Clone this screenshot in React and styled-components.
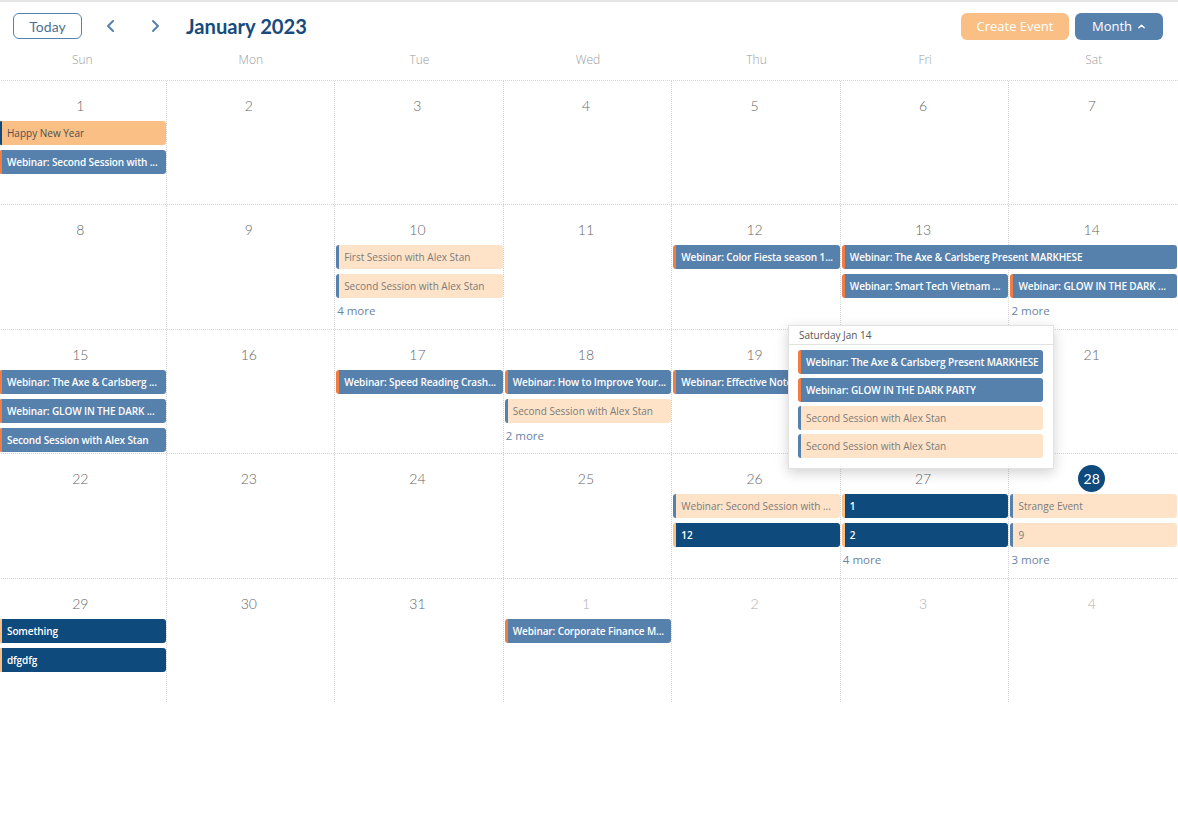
import React from "react";
import styled, { createGlobalStyle, css } from "styled-components";

const GlobalStyle = createGlobalStyle`
  body {
    margin: 0;
    background: #fff;
    font-family: "Open Sans", "Liberation Sans", sans-serif;
    overflow: hidden;
  }
  * { box-sizing: border-box; }
`;

const colors = {
  blue: "#5781ad",
  navy: "#0f4a7c",
  orange: "#f9bf84",
  peach: "#fee3c8",
  accent: "#f07d44",
  line: "#d4d4d4",
};

const eventTypes = {
  orange: { bg: colors.orange, fg: "#4f4f4f", edge: colors.navy, weight: 400 },
  blue: { bg: colors.blue, fg: "#fff", edge: colors.accent, weight: 600 },
  peach: { bg: colors.peach, fg: "#7b7b7b", edge: colors.blue, weight: 400 },
  navy: { bg: colors.navy, fg: "#fff", edge: colors.orange, weight: 600 },
};

const DAYS = ["Sun", "Mon", "Tue", "Wed", "Thu", "Fri", "Sat"];

const weeks = [
  {
    days: [1, 2, 3, 4, 5, 6, 7],
    events: [
      { col: 1, row: 2, type: "orange", title: "Happy New Year" },
      { col: 1, row: 3, type: "blue", title: "Webinar: Second Session with ..." },
    ],
    more: [],
  },
  {
    days: [8, 9, 10, 11, 12, 13, 14],
    events: [
      { col: 3, row: 2, type: "peach", title: "First Session with Alex Stan" },
      { col: 3, row: 3, type: "peach", title: "Second Session with Alex Stan" },
      { col: 5, row: 2, type: "blue", title: "Webinar: Color Fiesta season 1..." },
      { col: 6, span: 2, row: 2, type: "blue", title: "Webinar: The Axe & Carlsberg Present MARKHESE" },
      { col: 6, row: 3, type: "blue", title: "Webinar: Smart Tech Vietnam ..." },
      { col: 7, row: 3, type: "blue", title: "Webinar: GLOW IN THE DARK ..." },
    ],
    more: [
      { col: 3, row: 4, count: 4 },
      { col: 7, row: 4, count: 2 },
    ],
  },
  {
    days: [15, 16, 17, 18, 19, 20, 21],
    events: [
      { col: 1, row: 2, type: "blue", title: "Webinar: The Axe & Carlsberg ..." },
      { col: 1, row: 3, type: "blue", title: "Webinar: GLOW IN THE DARK ..." },
      { col: 1, row: 4, type: "blue", title: "Second Session with Alex Stan" },
      { col: 3, row: 2, type: "blue", title: "Webinar: Speed Reading Crash..." },
      { col: 4, row: 2, type: "blue", title: "Webinar: How to Improve Your..." },
      { col: 4, row: 3, type: "peach", title: "Second Session with Alex Stan" },
      { col: 5, row: 2, type: "blue", title: "Webinar: Effective Note Taki..." },
    ],
    more: [{ col: 4, row: 4, count: 2 }],
  },
  {
    days: [22, 23, 24, 25, 26, 27, 28],
    today: 28,
    events: [
      { col: 5, row: 2, type: "peach", title: "Webinar: Second Session with ..." },
      { col: 5, row: 3, type: "navy", title: "12" },
      { col: 6, row: 2, type: "navy", title: "1" },
      { col: 6, row: 3, type: "navy", title: "2" },
      { col: 7, row: 2, type: "peach", title: "Strange Event" },
      { col: 7, row: 3, type: "peach", title: "9" },
    ],
    more: [
      { col: 6, row: 4, count: 4 },
      { col: 7, row: 4, count: 3 },
    ],
  },
  {
    days: [29, 30, 31, 1, 2, 3, 4],
    otherFrom: 3,
    events: [
      { col: 1, row: 2, type: "navy", title: "Something" },
      { col: 1, row: 3, type: "navy", title: "dfgdfg" },
      { col: 4, row: 2, type: "blue", title: "Webinar: Corporate Finance M..." },
    ],
    more: [],
  },
];

const popupEvents = [
  { type: "blue", title: "Webinar: The Axe & Carlsberg Present MARKHESE" },
  { type: "blue", title: "Webinar: GLOW IN THE DARK PARTY" },
  { type: "peach", title: "Second Session with Alex Stan" },
  { type: "peach", title: "Second Session with Alex Stan" },
];

const Chevron = ({ dir }) => (
  <svg width="14" height="14" viewBox="0 0 14 14" fill="none">
    <polyline
      points={dir === "left" ? "9,2 4,7 9,12" : "5,2 10,7 5,12"}
      stroke={colors.blue}
      strokeWidth="2"
      strokeLinecap="round"
      strokeLinejoin="round"
    />
  </svg>
);

const Caret = () => (
  <svg width="9" height="9" viewBox="0 0 10 10" fill="none">
    <polyline points="2,6.5 5,3.5 8,6.5" stroke="#fff" strokeWidth="1.5" strokeLinecap="round" strokeLinejoin="round" />
  </svg>
);

const App = () => (
  <Page>
    <GlobalStyle />
    <Toolbar>
      <TodayButton>Today</TodayButton>
      <NavButton><Chevron dir="left" /></NavButton>
      <NavButton><Chevron dir="right" /></NavButton>
      <Title>January 2023</Title>
      <Spacer />
      <ActionButton variant="orange">Create Event</ActionButton>
      <ActionButton variant="blue">Month <Caret /></ActionButton>
    </Toolbar>
    <DayHeader>
      {DAYS.map(d => <DayName key={d}>{d}</DayName>)}
    </DayHeader>
    <MonthGrid>
      {weeks.map((w, wi) => (
        <Week key={wi}>
          <CellLayer>
            {w.days.map((d, i) => <Cell key={i} last={i === 6} />)}
          </CellLayer>
          <ContentLayer>
            {w.days.map((d, i) => (
              <DateSlot key={i} style={{ gridColumn: i + 1 }}>
                <DateNum
                  today={w.today === d}
                  other={w.otherFrom !== undefined && i >= w.otherFrom}
                >
                  {d}
                </DateNum>
              </DateSlot>
            ))}
            {w.events.map((e, i) => (
              <Event
                key={i}
                kind={e.type}
                style={{ gridColumn: `${e.col} / span ${e.span || 1}`, gridRow: e.row }}
              >
                {e.title}
              </Event>
            ))}
            {w.more.map((m, i) => (
              <More key={i} style={{ gridColumn: m.col, gridRow: m.row }}>
                {m.count} more
              </More>
            ))}
          </ContentLayer>
        </Week>
      ))}
    </MonthGrid>
    <Popup>
      <PopupHeader>Saturday Jan 14</PopupHeader>
      <PopupList>
        {popupEvents.map((e, i) => (
          <Event key={i} kind={e.type}>{e.title}</Event>
        ))}
      </PopupList>
    </Popup>
  </Page>
);

const Page = styled.div`
  position: relative;
  width: 1178px;
  border-top: 2px solid #e4e4e4;
`;

const Toolbar = styled.div`
  display: flex;
  align-items: center;
  height: 48px;
  padding: 0 15px 0 13px;
`;

const TodayButton = styled.button`
  width: 69px;
  height: 26px;
  border: 1px solid ${colors.blue};
  border-radius: 6px;
  background: #fff;
  color: #4e6f93;
  font-family: Lato, "Liberation Sans", sans-serif;
  font-size: 14px;
  padding: 0;
`;

const NavButton = styled.button`
  display: flex;
  align-items: center;
  justify-content: center;
  width: 30px;
  height: 26px;
  margin-left: 14px;
  border: none;
  background: none;
  padding: 0;
`;

const Title = styled.h1`
  margin: 0 0 0 16px;
  font-family: Lato, "Liberation Sans", sans-serif;
  font-weight: 700;
  font-size: 20.2px;
  color: #174b7b;
`;

const Spacer = styled.div`
  flex: 1;
`;

const ActionButton = styled.button`
  display: flex;
  align-items: center;
  justify-content: center;
  gap: 5px;
  height: 27px;
  margin-left: 6px;
  border: none;
  border-radius: 6px;
  color: #fff;
  font-family: "Open Sans", "Liberation Sans", sans-serif;
  font-size: 13px;
  padding: 0;
  ${p => p.variant === "orange"
    ? css`
      width: 108px;
      background: ${colors.orange};
    `
    : css`
      width: 88px;
      background: ${colors.blue};
    `}
`;

const DayHeader = styled.div`
  display: grid;
  grid-template-columns: repeat(7, 1fr);
  width: 1180px;
  margin-left: -2px;
  height: 30px;
`;

const DayName = styled.div`
  text-align: center;
  line-height: 20px;
  font-size: 12px;
  color: #9c9c9c;
  font-weight: 300;
`;

const MonthGrid = styled.div`
  display: flex;
  flex-direction: column;
  width: 1180px;
  margin-left: -2px;
  height: 622px;
`;

const Week = styled.div`
  flex: 1;
  display: grid;
  grid-template: 1fr / 1fr;
  border-top: 1px dotted ${colors.line};
  overflow: hidden;
`;

const CellLayer = styled.div`
  grid-area: 1 / 1;
  display: grid;
  grid-template-columns: repeat(7, 1fr);
`;

const Cell = styled.div`
  border-right: ${p => (p.last ? "none" : `1px dotted ${colors.line}`)};
`;

const ContentLayer = styled.div`
  grid-area: 1 / 1;
  display: grid;
  grid-template-columns: repeat(7, 1fr);
  grid-template-rows: 35px;
  grid-auto-rows: 24px;
  row-gap: 5px;
  align-content: start;
`;

const DateSlot = styled.div`
  grid-row: 1;
  display: flex;
  justify-content: center;
  padding: 11px 4px 0 0;
`;

const DateNum = styled.div`
  min-width: 27px;
  height: 27px;
  line-height: 27px;
  text-align: center;
  font-family: Lato, "Liberation Sans", sans-serif;
  font-weight: 300;
  font-size: 14px;
  color: ${p => (p.other ? "#b0b0b0" : "#666")};
  ${p => p.today && css`
    background: ${colors.navy};
    color: #fff;
    border-radius: 50%;
    font-weight: 400;
  `}
`;

const Event = styled.div`
  height: 24px;
  margin: 0 1px 0 1px;
  padding: 0 6px 0 5px;
  display: flex;
  align-items: center;
  border-radius: 3px;
  border-left: 3px solid ${p => eventTypes[p.kind].edge};
  background: ${p => eventTypes[p.kind].bg};
  color: ${p => eventTypes[p.kind].fg};
  font-weight: ${p => eventTypes[p.kind].weight};
  letter-spacing: ${p => (eventTypes[p.kind].weight > 400 ? "-0.12px" : "0")};
  font-size: 10px;
  white-space: nowrap;
  overflow: hidden;
  text-overflow: ellipsis;
`;

const More = styled.div`
  font-size: 11.5px;
  line-height: 16px;
  color: #6a84a4;
  padding-left: 2px;
`;

const Popup = styled.div`
  position: absolute;
  left: 788px;
  top: 323px;
  width: 266px;
  background: #fff;
  border: 1px solid #e2e2e2;
  box-shadow: 0 4px 12px rgba(0, 0, 0, 0.18);
`;

const PopupHeader = styled.div`
  height: 19px;
  line-height: 18px;
  padding: 0 10px;
  font-size: 10px;
  color: #555;
  border-bottom: 1px solid #e2e2e2;
`;

const PopupList = styled.div`
  display: flex;
  flex-direction: column;
  gap: 4px;
  padding: 5px 10px 10px 9px;

  ${Event} {
    margin: 0;
  }
`;

export default App;
